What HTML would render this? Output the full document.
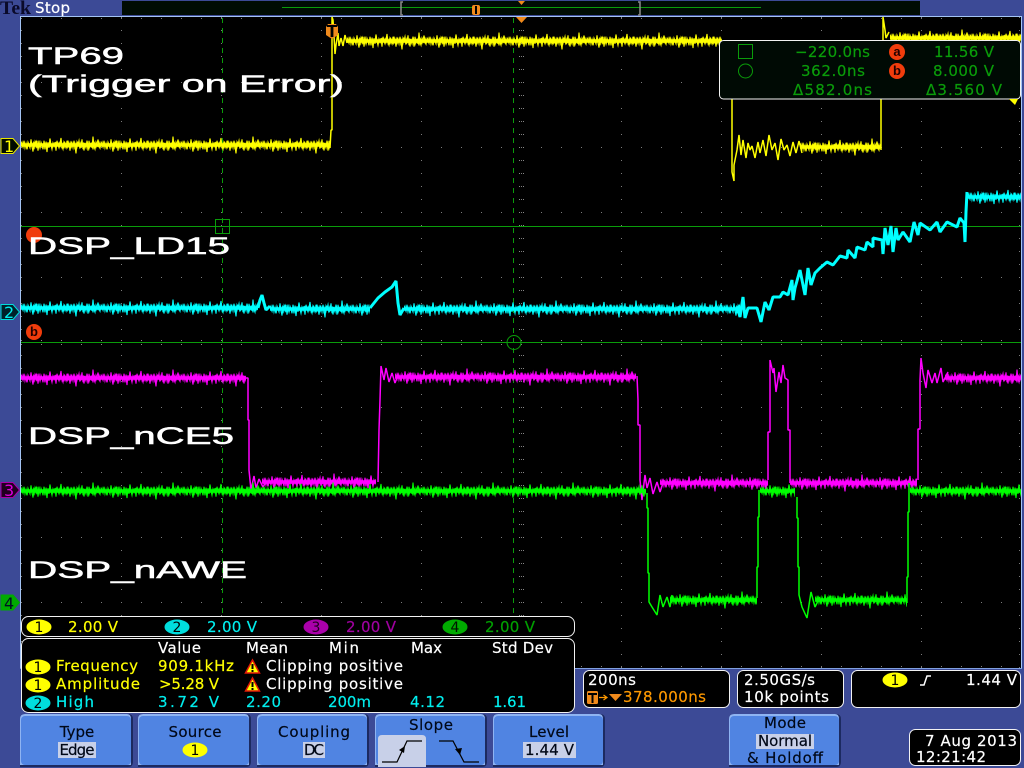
<!DOCTYPE html>
<html><head><meta charset="utf-8"><title>Tek Stop</title>
<style>
html,body{margin:0;padding:0;background:#3c4a96;width:1024px;height:768px;overflow:hidden}
svg{display:block}
text{font-family:"DejaVu Sans","Liberation Sans",sans-serif;font-size:15px;stroke-width:.2}
.big{font-family:"Liberation Sans",sans-serif;font-size:24px;fill:#fff;stroke:#fff;stroke-width:.5}
.k{fill:#000818;stroke:#000818;text-anchor:middle}
.w{fill:#fff;stroke:#fff}.y{fill:#ff0;stroke:#ff0}.c{fill:#0ee;stroke:#0ee}.o{fill:#f90;stroke:#f90}.g{fill:#0a9c0a;stroke:#0a9c0a}
.t{fill:none;stroke-linejoin:bevel}
.d{font-size:16px;stroke-width:0}
</style></head><body>
<svg width="1024" height="768" viewBox="0 0 1024 768" xmlns="http://www.w3.org/2000/svg">
<defs>
<path id="n" fill="none" d="M0 12L1 10 2 13 3 9 4 14 5 11 6 15 7 10 8 12 9 14 10 8 11 13 12 11 13 15 14 10 15 13 16 9 17 16 18 11 19 14 20 10 21 12 22 15 23 9 24 13 25 11 26 17 27 10 28 14 29 8 30 12 31 15 32 11 33 13 34 10 35 16 36 9 37 12 38 14 39 11 40 7 41 13 42 15 43 10 44 12 45 14 46 9 47 13 48 11 49 16 50 10 51 11 52 14 53 9 54 13 55 18 56 10 57 12 58 9 59 14 60 13 61 8 62 15 63 11 64 12 65 14 66 10 67 16 68 9 69 13 70 11 71 14 72 6 73 13 74 15 75 10 76 12 77 13 78 10 79 12 80 12"/>
<g id="m" fill="none">
<path stroke-width="3.500" d="M0 12H80"/>
<g stroke-width="1.100">
<use href="#n" transform="translate(0,12) scale(1,1.400) translate(0,-12)"/>
<use href="#n" transform="translate(37,12) scale(1,1.100) translate(0,-12)"/>
<use href="#n" transform="translate(-43,12) scale(1,1.100) translate(0,-12)"/>
</g>
</g>
<pattern id="ny" patternUnits="userSpaceOnUse" width="80" height="24"><use href="#m" stroke="#ff0"/></pattern>
<pattern id="nc" patternUnits="userSpaceOnUse" width="80" height="24"><use href="#m" stroke="#0ff"/></pattern>
<pattern id="nm" patternUnits="userSpaceOnUse" width="80" height="24"><use href="#m" stroke="#f0f"/></pattern>
<pattern id="ng" patternUnits="userSpaceOnUse" width="80" height="24"><use href="#m" stroke="#0f0"/></pattern>
</defs>

<!-- frame -->
<rect width="1024" height="768" fill="#3c4a96"/>
<rect x="122" y="1" width="798" height="14" fill="#000c04"/>
<rect x="20" y="16" width="1002" height="652" fill="#000"/>
<path d="M20.5 668V16.5H1021.5V668" fill="none" stroke="#a4c4f4"/>
<path d="M20 668.5H1022" stroke="#7f9fe0"/>
<text x="0" y="14" textLength="31" lengthAdjust="spacingAndGlyphs" style="font-family:'Liberation Serif',serif;font-size:19px;font-weight:bold;fill:#0a0a2a">Tek</text>
<text x="35" y="13" textLength="35" class="w">Stop</text>

<!-- record view -->
<path d="M282 7.5H761" stroke="#0a9c0a"/>
<path d="M403 2H401V15H403M638 2H640V15H638" fill="none" stroke="#888" stroke-width="1.600"/>
<rect x="472" y="5" width="8" height="10" rx="2" fill="#f08a1c"/><path d="M475 6H477V14H475Z" fill="#000"/>
<path d="M518 1H525L521.500 5Z" fill="#f08a1c"/>

<!-- graticule -->
<g stroke="#7c7c7c" stroke-width="1" fill="none">
<path stroke-dasharray="1 19" d="M21 18.500H1021M21 82.500H1021M21 147.500H1021M21 212.500H1021M21 277.500H1021M21 407.500H1021M21 472.500H1021M21 537.500H1021M21 602.500H1021M21 666.500H1021M21 342.500H1021"/>
<path stroke-dasharray="1 12" d="M21.500 30V668M121.500 17V668M221.500 17V668M321.500 17V668M421.500 17V668M621.500 17V668M721.500 17V668M821.500 17V668M921.500 17V668M1019.500 17V668M521.500 17V668"/>
</g>
<g stroke="#8a8a8a" fill="none" stroke-dasharray="1 12">
<path d="M519.500 17V668M523.500 17V668"/>
</g>
<g stroke="#8a8a8a" fill="none" stroke-dasharray="1 19">
<path d="M21 340.500H1021M21 344.500H1021"/>
</g>

<!-- cursors -->
<g fill="none" stroke="#0a9c0a">
<path d="M21 226.500H1021M21 342.500H1021"/>
<path stroke-dasharray="5 5" d="M222.500 18V667M513.500 18V667"/>
<rect x="215.500" y="219.500" width="14" height="14"/>
<circle cx="514" cy="342.500" r="7"/>
</g>
<circle cx="34" cy="235" r="8" fill="#f03c0c"/>
<circle cx="34" cy="332" r="8" fill="#f03c0c"/>
<text x="34" y="336" text-anchor="middle" style="font-family:'Liberation Sans',sans-serif;font-size:13px;font-weight:bold;fill:#200">b</text>

<!-- traces: magenta -->
<g>
<rect transform="translate(21,366)" width="225" height="24" fill="url(#nm)"/>
<rect transform="translate(262,470)" width="114" height="24" fill="url(#nm)"/>
<rect transform="translate(395,365)" width="241" height="24" fill="url(#nm)"/>
<rect transform="translate(660,471)" width="108" height="24" fill="url(#nm)"/>
<rect transform="translate(790,471)" width="127" height="24" fill="url(#nm)"/>
<rect transform="translate(945,366)" width="76" height="24" fill="url(#nm)"/>
<path class="t" stroke="#f0f" stroke-width="1.500" d="M246 378H248V420H249V470L251 490 254 476 256 488 259 479 263 487 266 482M378 482L379 430 380 400 381 366 384 380 386 368 389 382 392 373 395 383 398 375M637 376L638 400V425H640V480L642 500 645 475 647 488 650 478 653 494 657 482 660 492 664 480M768 480V432H770V380L770 360 773 373 774 368 776 392 779 372 781 383 783 365 785 378 788 380V430H790V483M918 480V429H920V380L921 358 923 373 926 388 928 370 932 383 935 373 937 383 941 368 943 382 948 372"/>
</g>
<!-- traces: green -->
<g>
<rect transform="translate(21,479)" width="625" height="24" fill="url(#ng)"/>
<rect transform="translate(670,588)" width="87" height="24" fill="url(#ng)"/>
<rect transform="translate(760,479)" width="35" height="24" fill="url(#ng)"/>
<rect transform="translate(815,588)" width="92" height="24" fill="url(#ng)"/>
<rect transform="translate(910,479)" width="111" height="24" fill="url(#ng)"/>
<path class="t" stroke="#0f0" stroke-width="1.500" d="M647 493V508H648V573H649V602L652 607 657 615 660 595 663 607 667 597 670 607 672 595M757 598V567H758V517H759V490M797 497V518H798V567H799V595L802 607 807 618 811 592 815 607 820 597M907 603V577H908V512H909V483"/>
</g>
<!-- traces: cyan -->
<g>
<rect transform="translate(21,296)" width="237" height="24" fill="url(#nc)"/>
<rect transform="translate(270,297)" width="100" height="24" fill="url(#nc)"/>
<rect transform="translate(404,297)" width="336" height="24" fill="url(#nc)"/>
<rect transform="translate(968,185)" width="53" height="24" fill="url(#nc)"/>
<path class="t" stroke="#0ff" stroke-width="3" d="M258 308L260 300 262 295 264 303 266 310 270 306M370 308L378 298 385 292 392 287 396 281 398 303 400 315 404 308"/>
<path class="t" stroke="#0ff" stroke-width="3" d="M738 309L740 317 743 297 745 318 748 308 757 308 761 322 765 302 769 310 773 297 780 297 783 292 788 295 792 280 793 300 795 288 800 270 805 295 808 268 811 285 815 273 820 268 827 262 833 265 840 256 847 258 848 250 855 258 857 247 865 250 867 242 873 247 873 238 882 240 883 254 885 228 888 245 891 226 893 252 896 228 898 240 903 232 910 242 914 222 918 235 920 223 930 230 937 222 940 232 947 222 957 227 960 218 964 223 965 242 966 212 967 192"/>
</g>
<!-- traces: yellow -->
<g>
<rect transform="translate(21,133)" width="309" height="24" fill="url(#ny)"/>
<rect transform="translate(347,29)" width="375" height="24" fill="url(#ny)"/>
<rect transform="translate(800,135)" width="81" height="24" fill="url(#ny)"/>
<rect transform="translate(890,26)" width="131" height="24" fill="url(#ny)"/>
<path class="t" stroke="#ff0" stroke-width="1.500" d="M330 148L331 130H332V17L333 20 334 36 335 54 336 45 338 33 339 46 341 38 343 46 345 35 347 43M732 99V172L734 181V165L737 150 739 135 741 155 743 140 746 158 748 143 750 150 752 146 755 158 758 142 760 153 763 140 766 156 769 135 772 150 775 143 778 160 781 139 784 150 787 145 790 156 793 142 796 153 799 141 802 153M881 150V60M883 40V17L885 30 886 38 889 32"/>
</g>

<!-- labels -->
<text x="28" y="64" class="big" textLength="96" lengthAdjust="spacingAndGlyphs">TP69</text>
<text x="28" y="92" class="big" textLength="316" lengthAdjust="spacingAndGlyphs">(Trigger on Error)</text>
<text x="28" y="254" class="big" textLength="202" lengthAdjust="spacingAndGlyphs">DSP_LD15</text>
<text x="28" y="444" class="big" textLength="206" lengthAdjust="spacingAndGlyphs">DSP_nCE5</text>
<text x="28" y="578" class="big" textLength="219" lengthAdjust="spacingAndGlyphs">DSP_nAWE</text>

<!-- trigger marks -->
<path d="M516 17H527L521.500 23Z" fill="#f08a1c"/>
<path d="M328 24H336L338 27V35L332 39 326 35V27Z" fill="#f08a1c"/>
<path d="M327 25H337V27H333.400V37H330.600V27H327Z" fill="#000"/>

<!-- channel markers -->
<path d="M1 138.500H13L19.500 146 13 153.500H1Z" fill="#000a00" stroke="#e8e800"/>
<text x="4" y="152" class="d" style="fill:#ff0">1</text>
<path d="M1 304.500H13L19.500 312 13 319.500H1Z" fill="#00222a" stroke="#0dd"/>
<text x="4" y="318" class="d" style="fill:#0ee">2</text>
<path d="M1 482.500H13L19.500 490 13 497.500H1Z" fill="#200020" stroke="#a0a"/>
<text x="4" y="496" class="d" style="fill:#d0d">3</text>
<path d="M1 595H13L19.500 602.500 13 610H1Z" fill="#0a0" stroke="#0a0"/>
<text x="4" y="609" class="d" style="fill:#012">4</text>

<!-- cursor readout -->
<rect x="719.500" y="40.500" width="301" height="58.500" rx="4" fill="#000a04" stroke="#f2f2f2"/>
<path d="M1009 99H1018L1015 105Z" fill="#ff0"/>
<g fill="none" stroke="#0a9c0a"><rect x="738.500" y="44.500" width="14" height="14"/><circle cx="745.500" cy="71" r="7"/></g>
<text x="795" y="57" class="g" textLength="75">−220.0ns</text>
<text x="801" y="76" class="g" textLength="64">362.0ns</text>
<text x="793" y="95" class="g" textLength="79">Δ582.0ns</text>
<circle cx="897" cy="52" r="8" fill="#f03c0c"/><circle cx="897" cy="71" r="8" fill="#f03c0c"/>
<text x="897" y="56" text-anchor="middle" style="font-family:'Liberation Sans',sans-serif;font-size:13px;font-weight:bold;fill:#200">a</text>
<text x="897" y="75" text-anchor="middle" style="font-family:'Liberation Sans',sans-serif;font-size:13px;font-weight:bold;fill:#200">b</text>
<text x="934" y="57" class="g" textLength="60">11.56 V</text>
<text x="933" y="76" class="g" textLength="61">8.000 V</text>
<text x="926" y="95" class="g" textLength="76">Δ3.560 V</text>

<!-- channel bar -->
<rect x="21.500" y="616.500" width="553" height="20" rx="7" fill="#000" stroke="#f2f2f2"/>
<ellipse cx="39" cy="627" rx="12.500" ry="7.500" fill="#ff0"/><text x="39" y="632" text-anchor="middle" style="font-size:14px;fill:#000">1</text>
<text x="68" y="632" class="y" textLength="50">2.00 V</text>
<ellipse cx="177" cy="627" rx="12.500" ry="7.500" fill="#0dd"/><text x="177" y="632" text-anchor="middle" style="font-size:14px;fill:#000">2</text>
<text x="207" y="632" class="c" textLength="50">2.00 V</text>
<ellipse cx="316" cy="627" rx="12.500" ry="7.500" fill="#a0a"/><text x="316" y="632" text-anchor="middle" style="font-size:14px;fill:#200020">3</text>
<text x="346" y="632" textLength="50" style="fill:#a000a0;stroke:#a000a0">2.00 V</text>
<ellipse cx="455" cy="627" rx="12.500" ry="7.500" fill="#0a0"/><text x="455" y="632" text-anchor="middle" style="font-size:14px;fill:#001000">4</text>
<text x="485" y="632" textLength="50" style="fill:#00a000;stroke:#00a000">2.00 V</text>

<!-- measurements -->
<rect x="21.500" y="638.500" width="553" height="74" rx="7" fill="#000" stroke="#f2f2f2"/>
<text x="158" y="653" class="w" textLength="43">Value</text>
<text x="246" y="653" class="w" textLength="42">Mean</text>
<text x="329" y="653" class="w" textLength="30">Min</text>
<text x="411" y="653" class="w" textLength="31">Max</text>
<text x="492" y="653" class="w" textLength="61">Std Dev</text>

<ellipse cx="38" cy="667" rx="12.500" ry="7.500" fill="#ff0"/><text x="38" y="672" text-anchor="middle" style="font-size:14px;fill:#000">1</text>
<text x="56" y="671" class="y" textLength="82">Frequency</text>
<text x="158" y="671" class="y" textLength="76">909.1kHz</text>
<path d="M252.500 660L259.500 673H245.500Z" fill="#ff0" stroke="#e01808" stroke-width="1.500"/><path d="M251.500 664H253.500V669H251.500ZM251.500 670H253.500V672H251.500Z" fill="#000"/>
<text x="266" y="671" class="w" textLength="137">Clipping positive</text>

<ellipse cx="38" cy="685" rx="12.500" ry="7.500" fill="#ff0"/><text x="38" y="690" text-anchor="middle" style="font-size:14px;fill:#000">1</text>
<text x="56" y="689" class="y" textLength="84">Amplitude</text>
<text x="159" y="689" class="y" textLength="60">&gt;5.28 V</text>
<path d="M252.500 678L259.500 691H245.500Z" fill="#ff0" stroke="#e01808" stroke-width="1.500"/><path d="M251.500 682H253.500V687H251.500ZM251.500 688H253.500V690H251.500Z" fill="#000"/>
<text x="266" y="689" class="w" textLength="137">Clipping positive</text>

<ellipse cx="38" cy="703" rx="12.500" ry="7.500" fill="#0dd"/><text x="38" y="708" text-anchor="middle" style="font-size:14px;fill:#000">2</text>
<text x="56" y="707" class="c" textLength="38">High</text>
<text x="158" y="707" class="c" textLength="61">3.72 V</text>
<text x="246" y="707" class="c" textLength="35">2.20</text>
<text x="328" y="707" class="c" textLength="43">200m</text>
<text x="410" y="707" class="c" textLength="35">4.12</text>
<text x="493" y="707" class="c" textLength="33">1.61</text>

<!-- timebase etc -->
<rect x="583.500" y="670.500" width="146" height="37" rx="6" fill="#000" stroke="#f2f2f2"/>
<text x="588" y="685" class="w" textLength="48">200ns</text>
<rect x="587" y="691" width="11" height="13" rx="1.500" fill="#f08a1c"/><path d="M588 693H597V695H593.500V703H591.500V695H588Z" fill="#000"/>
<path d="M599 697.500H606M603.500 695L607 697.500 603.500 700" fill="none" stroke="#f90" stroke-width="1.200"/>
<path d="M609 694H622L615.500 701Z" fill="#f08a1c"/>
<text x="623" y="702" class="o" textLength="83">378.000ns</text>

<rect x="737.500" y="670.500" width="106" height="37" rx="6" fill="#000" stroke="#f2f2f2"/>
<text x="744" y="685" class="w" textLength="71">2.50GS/s</text>
<text x="744" y="702" class="w" textLength="85">10k points</text>

<rect x="851.500" y="670.500" width="169" height="37" rx="6" fill="#000" stroke="#f2f2f2"/>
<ellipse cx="895" cy="680" rx="12.500" ry="7.500" fill="#ff0"/><text x="895" y="685" text-anchor="middle" style="font-size:14px;fill:#000">1</text>
<path d="M920 685H924L927 676H931" fill="none" stroke="#fff" stroke-width="1.500"/>
<text x="966" y="685" class="w" textLength="51">1.44 V</text>

<rect x="909.500" y="729.500" width="111" height="36" rx="6" fill="#000" stroke="#f2f2f2"/>
<text x="925" y="746" class="w" textLength="92">7 Aug 2013</text>
<text x="916" y="762" class="w" textLength="70">12:21:42</text>

<!-- softkeys -->
<g>
<path d="M20 767V719Q20 714 25 714H128Q133 714 133 719V762Q133 767 128 767Z" fill="#1c2a60"/><path d="M20 765V719Q20 714 25 714H127Q131 714 131 719V765Z" fill="#8fb4f2"/><rect x="21" y="716" width="110" height="49" rx="4" fill="#5084e2"/>
<path d="M138 767V719Q138 714 143 714H246Q251 714 251 719V762Q251 767 246 767Z" fill="#1c2a60"/><path d="M138 765V719Q138 714 143 714H245Q249 714 249 719V765Z" fill="#8fb4f2"/><rect x="139" y="716" width="110" height="49" rx="4" fill="#5084e2"/>
<path d="M257 767V719Q257 714 262 714H364Q369 714 369 719V762Q369 767 364 767Z" fill="#1c2a60"/><path d="M257 765V719Q257 714 262 714H363Q367 714 367 719V765Z" fill="#8fb4f2"/><rect x="258" y="716" width="109" height="49" rx="4" fill="#5084e2"/>
<path d="M375 767V719Q375 714 380 714H482Q487 714 487 719V762Q487 767 482 767Z" fill="#1c2a60"/><path d="M375 765V719Q375 714 380 714H481Q485 714 485 719V765Z" fill="#8fb4f2"/><rect x="376" y="716" width="109" height="49" rx="4" fill="#5084e2"/>
<path d="M493 767V719Q493 714 498 714H600Q605 714 605 719V762Q605 767 600 767Z" fill="#1c2a60"/><path d="M493 765V719Q493 714 498 714H599Q603 714 603 719V765Z" fill="#8fb4f2"/><rect x="494" y="716" width="109" height="49" rx="4" fill="#5084e2"/>
<path d="M729 767V719Q729 714 734 714H836Q841 714 841 719V762Q841 767 836 767Z" fill="#1c2a60"/><path d="M729 765V719Q729 714 734 714H835Q839 714 839 719V765Z" fill="#8fb4f2"/><rect x="730" y="716" width="109" height="49" rx="4" fill="#5084e2"/>
</g>
<text x="77" y="737" class="k">Type</text>
<rect x="58" y="742" width="38" height="16" fill="#c8d0e8"/><text x="77" y="755" class="k" textLength="35">Edge</text>
<text x="195" y="737" class="k" textLength="53">Source</text>
<ellipse cx="195" cy="750" rx="12.500" ry="7.500" fill="#ff0"/><text x="195" y="755" text-anchor="middle" style="font-size:14px;fill:#000">1</text>
<text x="314" y="737" class="k" textLength="72">Coupling</text>
<rect x="303" y="742" width="22" height="16" fill="#c8d0e8"/><text x="314" y="755" class="k" textLength="20">DC</text>
<text x="431" y="730" class="k" textLength="44">Slope</text>
<path d="M382 735H422Q426 735 426 739V767H378V739Q378 735 382 735Z" fill="#c8d0e8"/>
<path d="M382 762H397L407 741H422" fill="none" stroke="#000" stroke-width="1.200"/><path d="M405 746L399 750 404 753Z" fill="#000"/>
<path d="M439 741H453L464 762H479" fill="none" stroke="#000" stroke-width="1.200"/><path d="M455 749L462 748 460 755Z" fill="#000"/>
<text x="549" y="737" class="k" textLength="40">Level</text>
<rect x="523" y="742" width="53" height="16" fill="#c8d0e8"/><text x="549.500" y="755" class="k" textLength="49">1.44 V</text>
<text x="785" y="728" class="k" textLength="42">Mode</text>
<rect x="756" y="734" width="58" height="15" fill="#c8d0e8"/><text x="785" y="746" class="k" textLength="54">Normal</text>
<text x="785" y="763" class="k" textLength="76">&amp; Holdoff</text>
</svg>
</body></html>
